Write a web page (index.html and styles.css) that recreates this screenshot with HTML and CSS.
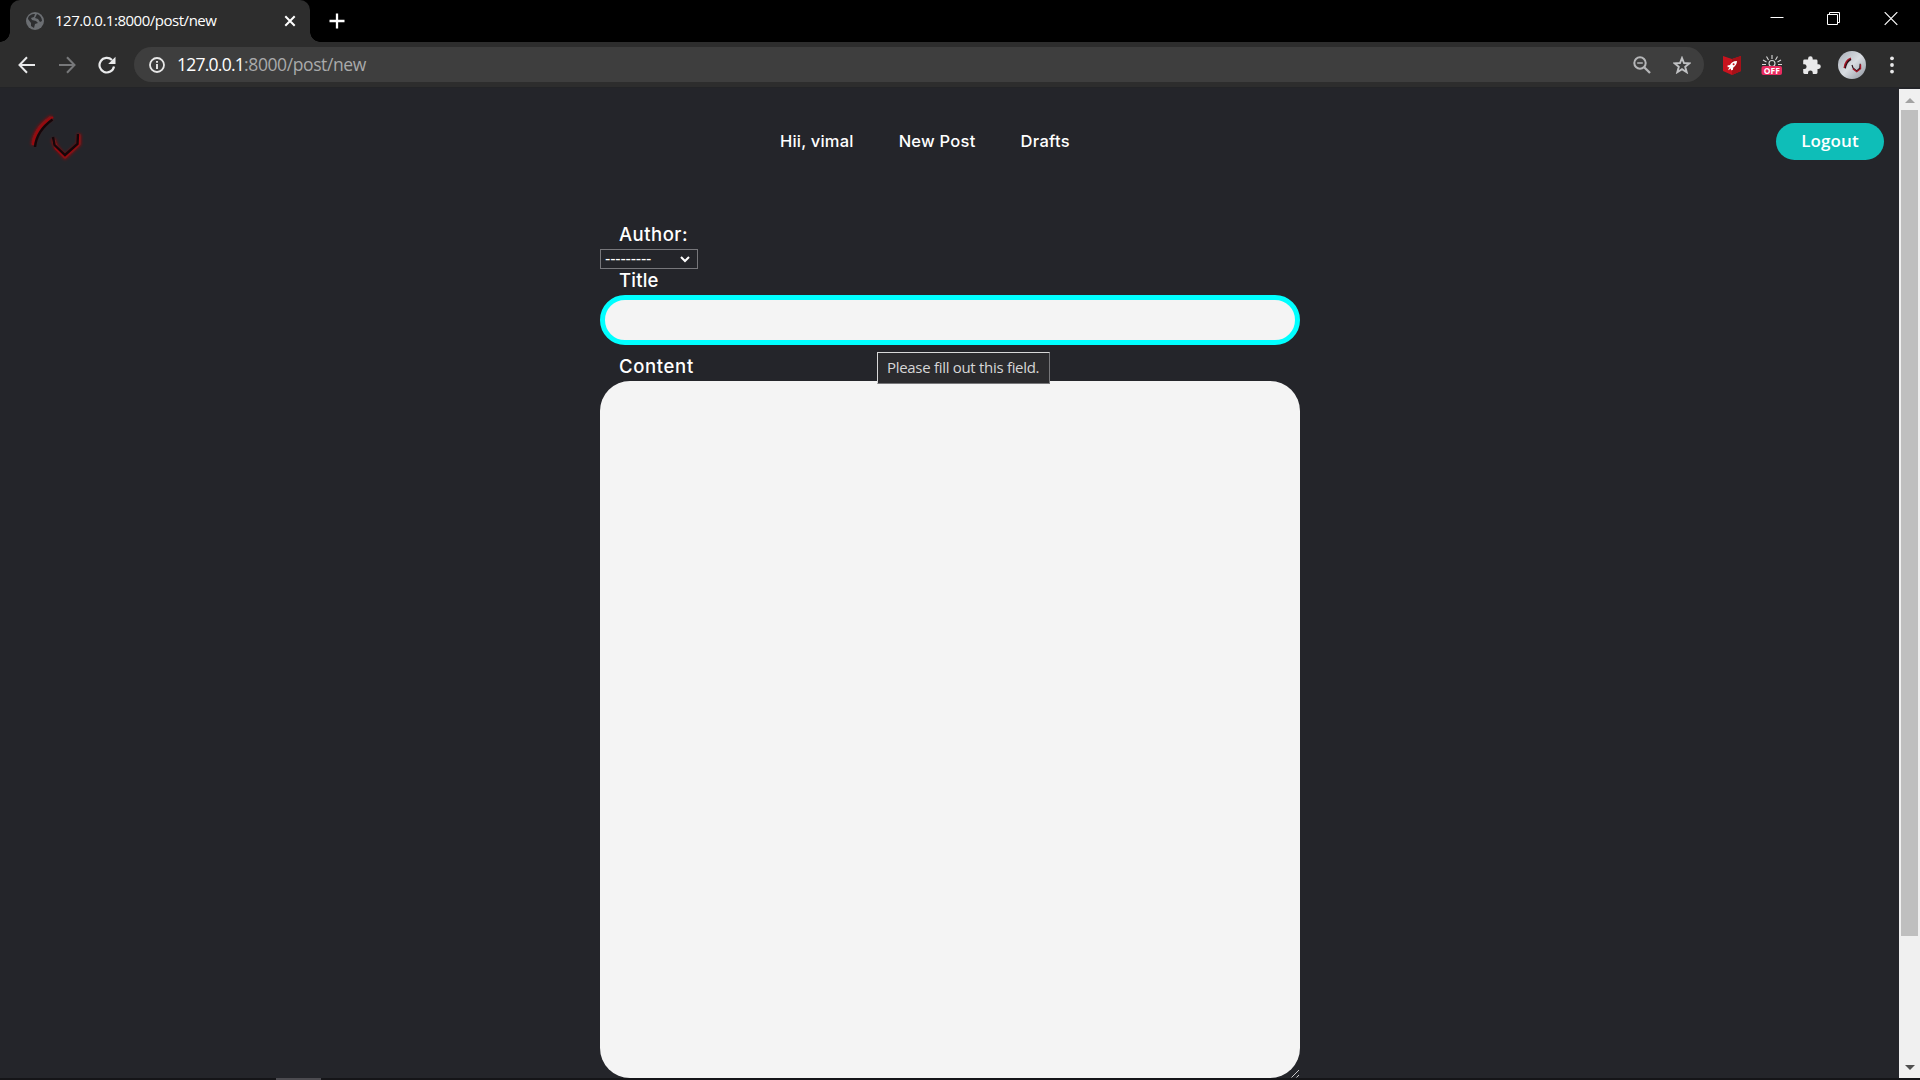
FILE: index.html
```html
<!DOCTYPE html>
<html lang="en">
<head>
<meta charset="utf-8">
<title>127.0.0.1:8000/post/new</title>
<link rel="stylesheet" href="styles.css">
</head>
<body>
<div class="window">
  <div class="tabstrip">
    <div class="tab">
      <svg class="globe" width="18" height="18" viewBox="0 0 18 18"><circle cx="9" cy="9" r="9" fill="#6b6e72"/><path d="M2 7C2 4 5 2 9 2L8 5 5 6 6 8 10 9 12 11 9 12 8 16 5 14 5 11ZM11 2C14 3 16 6 16 9L14 10 12 7 9 6Z" fill="#2d2e30"/></svg>
      <span class="tab-title">127.0.0.1:8000/post/new</span>
      <svg class="tab-close" width="12" height="12" viewBox="0 0 12 12"><path d="M1.3 1.3 10.7 10.7M10.7 1.3 1.3 10.7" stroke="#fff" stroke-width="2"/></svg>
    </div>
    <svg class="new-tab" width="16" height="16" viewBox="0 0 16 16"><path d="M8 .5V15.5M.5 8H15.5" stroke="#fff" stroke-width="2.3"/></svg>
    <div class="window-buttons">
      <svg width="14" height="14" viewBox="0 0 14 14"><path d="M.5 5.5H13.5" stroke="#fff"/></svg>
      <svg width="14" height="14" viewBox="0 0 14 14"><path d="M.5 2.5H10.5V12.5H.5ZM2.5 2V.5H12.5V10.5H11" fill="none" stroke="#fff"/></svg>
      <svg width="14" height="14" viewBox="0 0 14 14"><path d="M.7 .2 13.3 12.8M13.3 .2 .7 12.8" stroke="#fff" stroke-width="1.2"/></svg>
    </div>
  </div>
  <div class="toolbar">
    <div class="nav-icons">
      <svg width="18" height="18" viewBox="0 0 18 18"><path d="M17 9H2M9 1.3 1.5 9 9 16.7" fill="none" stroke="#e9eaeb" stroke-width="2"/></svg>
      <svg width="18" height="18" viewBox="0 0 18 18"><path d="M1 9H16M9 1.3 16.5 9 9 16.7" fill="none" stroke="#77787a" stroke-width="2"/></svg>
      <svg width="18" height="18" viewBox="0 0 18 18"><path d="M16 10.5A7.3 7.3 0 1 1 14 4" fill="none" stroke="#e9eaeb" stroke-width="2.2"/><path d="M17.5 .8V8H10.2Z" fill="#e9eaeb"/></svg>
    </div>
    <div class="address">
      <svg class="info" width="16" height="16" viewBox="0 0 16 16"><circle cx="8" cy="8" r="7" fill="none" stroke="#e8e8e8" stroke-width="1.8"/><path d="M8 7V12M8 4V5.8" stroke="#e8e8e8" stroke-width="1.9"/></svg>
      <span class="host">127.0.0.1</span><span class="path">:8000/post/new</span>
      <svg class="magnifier" width="18" height="18" viewBox="0 0 18 18"><circle cx="7" cy="7" r="5.7" fill="none" stroke="#b5b6b8" stroke-width="2"/><path d="M11.2 11.2 17 17" stroke="#b5b6b8" stroke-width="2.3"/><path d="M4.2 7H9.8" stroke="#b5b6b8" stroke-width="1.5"/></svg>
      <svg class="star" width="18" height="18" viewBox="0 0 18 18"><path d="M9 2 11 7 16.5 7.3 12.2 10.8 13.7 16.2 9 13.2 4.3 16.2 5.8 10.8 1.5 7.3 7 7Z" fill="none" stroke="#c0c1c3" stroke-width="1.9"/></svg>
    </div>
    <div class="extensions">
      <svg class="ext-shield" width="18" height="20" viewBox="0 0 18 20"><path d="M0 1 9 4 18 1V16L9 20 0 16Z" fill="#c8131e"/><path d="M9 4 18 1V16L9 20Z" fill="#a51118"/><path d="M14 6C10 6 8 8 7 10L4.5 10.5 4.7 12.2 6.5 12 5 15.2 8 13.5 8 15.3 9.8 15 10.3 12.5C12.5 11 14 9 14 6Z" fill="#fff"/><circle cx="10.6" cy="9.3" r="1" fill="#c8131e"/></svg>
      <svg class="ext-off" width="22" height="20" viewBox="0 0 22 20"><path d="M11 0V4M5.5 1.5 7.5 5M16.5 1.5 14.5 5M2 5 5.5 7M20 5 16.5 7M1 9.5H5M17 9.5H21" stroke="#d8d8d8" stroke-width="1.1"/><circle cx="11" cy="8.5" r="3" fill="none" stroke="#d8d8d8" stroke-width="1.1"/><rect x=".5" y="11" width="20.5" height="9" rx="2" fill="#e92b60"/><text class="off-text" x="10.8" y="18.7" text-anchor="middle">OFF</text></svg>
      <svg class="ext-puzzle" width="18" height="18" viewBox="0 0 18 18"><path d="M1.5 3.6H5.1V2.6A2.3 2.3 0 0 1 9.7 2.6V3.6H13.2Q14.5 3.6 14.5 5V8.3H15.5A2.3 2.3 0 0 1 15.5 12.9H14.5V16.6Q14.5 18 13.2 18H9.8V17A2.4 2.4 0 0 0 5 17V18H1.6Q.2 18 .2 16.6V13.1H1.2A2.4 2.4 0 0 0 1.2 8.3H.2V5Q.2 3.6 1.5 3.6Z" fill="#e9e9ea"/></svg>
      <svg class="profile" width="28" height="28" viewBox="0 0 28 28"><defs><linearGradient id="silver" x1="0" y1="0" x2="1" y2="1"><stop offset="0" stop-color="#a6acb6"/><stop offset=".5" stop-color="#d9dde2"/><stop offset="1" stop-color="#8c929c"/></linearGradient></defs><circle cx="14" cy="14" r="14" fill="url(#silver)"/><path d="M6.5 17C7 12 9 9 13 7.5" fill="none" stroke="#a31425" stroke-width="2"/><path d="M7.3 17.5C8 13 10 10 13 8.4M14 14 15 17 18.7 20 21.8 17.3 22.2 12.8" fill="none" stroke="#251018" stroke-width="1.2"/><path d="M14.8 17.8 18.7 20.8 22.6 17.7V13.5" fill="none" stroke="#a31425" stroke-width="1.2"/></svg>
      <svg class="menu" width="4" height="18" viewBox="0 0 4 18"><circle cx="2" cy="2.3" r="1.9" fill="#e9e9ea"/><circle cx="2" cy="9" r="1.9" fill="#e9e9ea"/><circle cx="2" cy="15.6" r="1.9" fill="#e9e9ea"/></svg>
    </div>
  </div>
  <div class="viewport">
    <div class="page">
      <header class="site-header">
        <svg class="logo" width="60" height="54" viewBox="0 0 60 54"><defs><filter id="glow" x="-30%" y="-30%" width="160%" height="160%"><feGaussianBlur stdDeviation="1.8"/></filter></defs><path d="M7 33C8 22 15 12 26 5M27 27 30 35 39 45 53 32V22" fill="none" stroke="#a00b0f" stroke-width="4" filter="url(#glow)"/><path d="M7 33C8 22 15 12 27 5M29 36 39 45 53 32V22" fill="none" stroke="#99090e" stroke-width="2"/><path d="M9 35C10 25 16 15 26.5 7.5M27 25 28.5 33 39 43 51.5 32 52 22" fill="none" stroke="#150609" stroke-width="2.4"/></svg>
        <nav class="links"><a class="greeting">Hii, vimal</a><a class="new-post">New Post</a><a class="drafts">Drafts</a></nav>
        <button class="logout">Logout</button>
      </header>
      <form class="post-form">
        <label class="label label-author">Author:</label>
        <div class="select"><span>---------</span><svg width="10" height="7" viewBox="0 0 10 7"><path d="M1 1 5 5 9 1" fill="none" stroke="#fff" stroke-width="2"/></svg></div>
        <label class="label label-title">Title</label>
        <div class="title-field"><div class="tooltip">Please fill out this field.</div></div>
        <label class="label label-content">Content</label>
        <div class="content-field"><svg class="grip" width="9" height="9" viewBox="0 0 9 9"><path d="M.5 8.5 8 1M5.5 8.5 8 6" stroke="#c9c9cb" stroke-width="1"/></svg></div>
      </form>
    </div>
    <div class="scrollbar">
      <svg width="10" height="5" viewBox="0 0 10 5"><path d="M0 5 5 0 10 5Z" fill="#a3a3a3"/></svg>
      <div class="thumb"></div>
      <svg width="10" height="5" viewBox="0 0 10 5"><path d="M0 0 5 5 10 0Z" fill="#505050"/></svg>
    </div>
  </div>
  <div class="taskbar-edge"><div class="active-app"></div></div>
</div>
</body>
</html>
```
FILE: styles.css
```css
* { box-sizing: border-box; }
body { margin: 0; background: #24252a; overflow: hidden; }
svg { display: block; flex: none; }
.window { width: 1920px; height: 1080px; display: flex; flex-direction: column; font-family: "Open Sans", sans-serif; }

.tabstrip { height: 42px; flex: none; background: #000; display: flex; align-items: center; padding-left: 10px; }
.tab { position: relative; width: 300px; height: 42px; background: #2d2d2d; border-radius: 10px 10px 0 0; display: flex; align-items: center; padding: 0 14px 0 16px; }
.tab::before, .tab::after { content: ""; position: absolute; bottom: 0; width: 10px; height: 10px; }
.tab::before { left: -10px; background: radial-gradient(circle at 0 0, transparent 9.5px, #2d2d2d 10px); }
.tab::after { right: -10px; background: radial-gradient(circle at 100% 0, transparent 9.5px, #2d2d2d 10px); }
.tab-title { margin-left: 11px; font-size: 15px; line-height: 40px; height: 42px; letter-spacing: -0.48px; color: #fff; white-space: nowrap; }
.tab-close { margin-left: auto; }
.new-tab { margin-left: 19px; }
.window-buttons { margin-left: auto; display: flex; gap: 43px; padding: 0 22px 4px 0; }

.toolbar { height: 46px; flex: none; background: #2d2d2d; border-bottom: 1px solid #232427; display: flex; align-items: center; padding-left: 18px; }
.nav-icons { display: flex; gap: 22px; }
.address { width: 1570px; height: 35px; margin-left: 18px; border-radius: 18px; background: #3e3e3e; display: flex; align-items: center; padding: 0 13px 0 15px; font-size: 17.5px; line-height: 35px; }
.host { margin-left: 12px; color: #fff; letter-spacing: -0.75px; }
.path { color: #a9aaab; letter-spacing: -0.4px; }
.magnifier { margin-left: auto; }
.star { margin-left: 22px; }
.extensions { display: flex; align-items: center; margin-left: 19px; }
.ext-off { margin-left: 20px; }
.off-text { font: 700 8.5px "Open Sans", sans-serif; fill: #fff; }
.ext-puzzle { margin-left: 20px; }
.profile { margin-left: 17px; }
.menu { margin-left: 24px; }

.viewport { height: 990px; flex: none; display: flex; }
.page { width: 1899px; height: 990px; background: #24252a; }
.site-header { height: 107px; display: flex; justify-content: space-between; align-items: center; padding: 0 15px 0 26px; }
.links { display: flex; padding-bottom: 2px; font: 500 16.5px/24px "Inter", sans-serif; color: #fff; }
.greeting { letter-spacing: 0.2px; }
.new-post { margin-left: 45px; letter-spacing: 0.25px; }
.drafts { margin-left: 45px; letter-spacing: 0.3px; }
.logo { margin: -5px -12px 0 0; }
.logout { width: 108px; height: 37px; border: 0; border-radius: 19px; padding: 0 0 1px; background: #0ebeb8; color: #fff; font: 600 17px/36px "Open Sans", sans-serif; letter-spacing: 0.1px; }

.post-form { width: 700px; margin-left: 600px; padding-top: 28px; }
.label { display: block; height: 22px; padding-left: 19px; margin-bottom: 4px; font: 500 18.5px/22px "Inter", sans-serif; color: #fff; }
.label-author { letter-spacing: 0.5px; }
.label-title { letter-spacing: 0.2px; }
.label-content { letter-spacing: 0.65px; margin-top: 10px; }
.select { width: 98px; height: 20px; border: 1px solid #77777b; display: flex; justify-content: space-between; align-items: center; padding: 0 7px 0 4px; color: #fff; font: 16px/18px "Liberation Sans", sans-serif; letter-spacing: -0.2px; }
.title-field { position: relative; height: 50px; border: 5px solid #00ffff; border-radius: 25px; background: #f4f4f4; }
.tooltip { position: absolute; left: 272px; top: 52px; z-index: 1; width: 173px; height: 32px; border: 1px solid #77777a; border-top-color: #d8d8d8; border-left-color: #d8d8d8; background: #2b2b2e; color: #d6d6d7; font-size: 15px; line-height: 28px; letter-spacing: -0.3px; padding-left: 9px; white-space: nowrap; }
.content-field { position: relative; height: 697px; border-radius: 30px; background: #f4f4f4; }
.grip { position: absolute; right: 0; bottom: 0; }

.scrollbar { width: 21px; background: #f0f0f0; border-top: 1px solid #24252a; display: flex; flex-direction: column; align-items: center; padding: 9px 0 8px; }
.thumb { width: 17px; height: 826px; margin: 7px 0 auto; background: #bfbfbf; }
.taskbar-edge { height: 2px; background: #151518; padding-left: 276px; }
.active-app { width: 45px; height: 2px; background: #4c4b50; }
```
